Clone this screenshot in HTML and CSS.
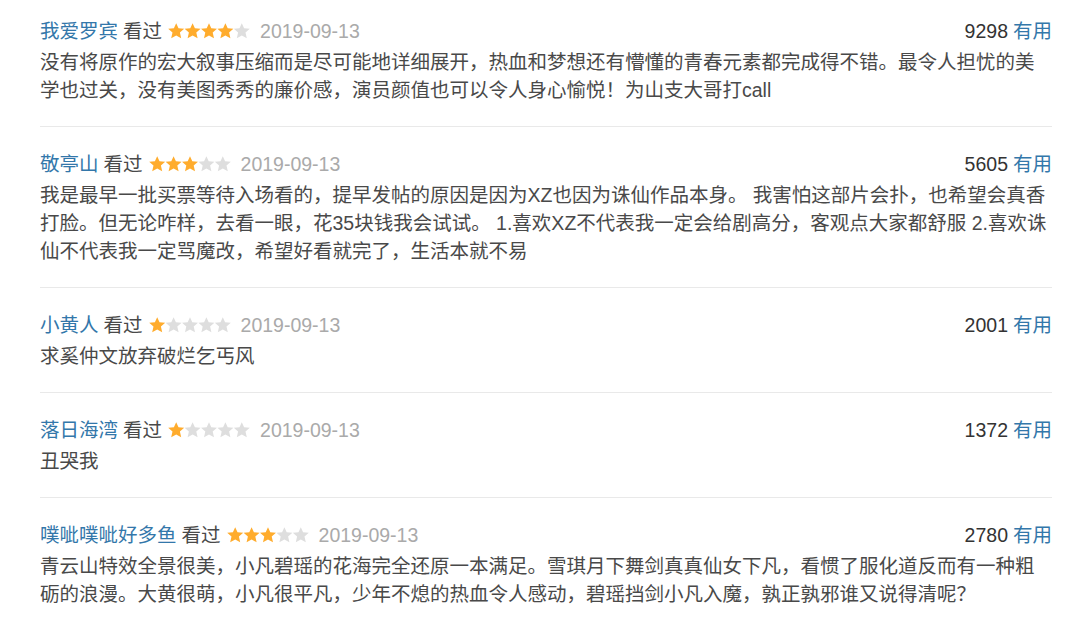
FILE: index.html
```html
<!DOCTYPE html>
<html lang="zh-CN">
<head>
<meta charset="utf-8">
<link rel="stylesheet" href="styles.css">
</head>
<body>
<div class="list">
  <div class="comment">
    <div class="head">
      <div class="info">
        <a class="name">我爱罗宾</a><span class="seen">看过</span>
        <svg class="stars" viewBox="0 0 82 16" width="82" height="16"><use href="#s" x="0" class="on"/><use href="#s" x="16.4" class="on"/><use href="#s" x="32.8" class="on"/><use href="#s" x="49.2" class="on"/><use href="#s" x="65.6" class="off"/></svg>
        <span class="date">2019-09-13</span>
      </div>
      <div class="vote"><span class="count">9298</span><a class="useful">有用</a></div>
    </div>
    <p class="text">没有将原作的宏大叙事压缩而是尽可能地详细展开，热血和梦想还有懵懂的青春元素都完成得不错。最令人担忧的美学也过关，没有美图秀秀的廉价感，演员颜值也可以令人身心愉悦！为山支大哥打call</p>
  </div>
  <div class="comment">
    <div class="head">
      <div class="info">
        <a class="name">敬亭山</a><span class="seen">看过</span>
        <svg class="stars" viewBox="0 0 82 16" width="82" height="16"><use href="#s" x="0" class="on"/><use href="#s" x="16.4" class="on"/><use href="#s" x="32.8" class="on"/><use href="#s" x="49.2" class="off"/><use href="#s" x="65.6" class="off"/></svg>
        <span class="date">2019-09-13</span>
      </div>
      <div class="vote"><span class="count">5605</span><a class="useful">有用</a></div>
    </div>
    <p class="text">我是最早一批买票等待入场看的，提早发帖的原因是因为XZ也因为诛仙作品本身。 我害怕这部片会扑，也希望会真香打脸。但无论咋样，去看一眼，花35块钱我会试试。 1.喜欢XZ不代表我一定会给剧高分，客观点大家都舒服 2.喜欢诛仙不代表我一定骂魔改，希望好看就完了，生活本就不易</p>
  </div>
  <div class="comment">
    <div class="head">
      <div class="info">
        <a class="name">小黄人</a><span class="seen">看过</span>
        <svg class="stars" viewBox="0 0 82 16" width="82" height="16"><use href="#s" x="0" class="on"/><use href="#s" x="16.4" class="off"/><use href="#s" x="32.8" class="off"/><use href="#s" x="49.2" class="off"/><use href="#s" x="65.6" class="off"/></svg>
        <span class="date">2019-09-13</span>
      </div>
      <div class="vote"><span class="count">2001</span><a class="useful">有用</a></div>
    </div>
    <p class="text">求奚仲文放弃破烂乞丐风</p>
  </div>
  <div class="comment">
    <div class="head">
      <div class="info">
        <a class="name">落日海湾</a><span class="seen">看过</span>
        <svg class="stars" viewBox="0 0 82 16" width="82" height="16"><use href="#s" x="0" class="on"/><use href="#s" x="16.4" class="off"/><use href="#s" x="32.8" class="off"/><use href="#s" x="49.2" class="off"/><use href="#s" x="65.6" class="off"/></svg>
        <span class="date">2019-09-13</span>
      </div>
      <div class="vote"><span class="count">1372</span><a class="useful">有用</a></div>
    </div>
    <p class="text">丑哭我</p>
  </div>
  <div class="comment">
    <div class="head">
      <div class="info">
        <a class="name">噗呲噗呲好多鱼</a><span class="seen">看过</span>
        <svg class="stars" viewBox="0 0 82 16" width="82" height="16"><use href="#s" x="0" class="on"/><use href="#s" x="16.4" class="on"/><use href="#s" x="32.8" class="on"/><use href="#s" x="49.2" class="off"/><use href="#s" x="65.6" class="off"/></svg>
        <span class="date">2019-09-13</span>
      </div>
      <div class="vote"><span class="count">2780</span><a class="useful">有用</a></div>
    </div>
    <p class="text">青云山特效全景很美，小凡碧瑶的花海完全还原一本满足。雪琪月下舞剑真真仙女下凡，看惯了服化道反而有一种粗砺的浪漫。大黄很萌，小凡很平凡，少年不熄的热血令人感动，碧瑶挡剑小凡入魔，孰正孰邪谁又说得清呢？</p>
  </div>
</div>
<svg width="0" height="0" class="defs">
  <defs>
    <polygon id="s" points="8.2,0.2 10.5,5.3 16.2,5.8 11.9,9.6 13.2,15.3 8.2,12.4 3.2,15.3 4.5,9.6 0.2,5.8 5.9,5.3"/>
  </defs>
</svg>
</body>
</html>
```
FILE: styles.css
```css
html, body {
  margin: 0;
  padding: 0;
  background: #fff;
}
body {
  font-family: "Liberation Sans", "Noto Sans CJK SC", sans-serif;
  font-size: 19.5px;
  color: #494949;
}
.defs {
  position: absolute;
  width: 0;
  height: 0;
}
.list {
  width: 1012px;
  margin-left: 40px;
}
.comment {
  padding: 23px 0 22px;
  border-bottom: 1px solid #e9e9e9;
}
.comment:first-child {
  padding-top: 17px;
}
.comment:last-child {
  border-bottom: none;
}
.head {
  display: flex;
  justify-content: space-between;
  align-items: center;
  height: 28px;
  line-height: 28px;
  margin-bottom: 3px;
}
.info {
  display: flex;
  align-items: center;
}
.name {
  color: #3377aa;
}
.seen {
  margin-left: 5px;
  color: #494949;
}
.stars {
  margin-left: 6px;
  display: block;
}
.stars .on {
  fill: #ffac2d;
}
.stars .off {
  fill: #dedede;
}
.date {
  margin-left: 10px;
  color: #aaaaaa;
}
.count {
  color: #333;
}
.useful {
  margin-left: 5px;
  color: #3377aa;
}
.text {
  margin: 0;
  line-height: 28px;
  color: #494949;
}
```
